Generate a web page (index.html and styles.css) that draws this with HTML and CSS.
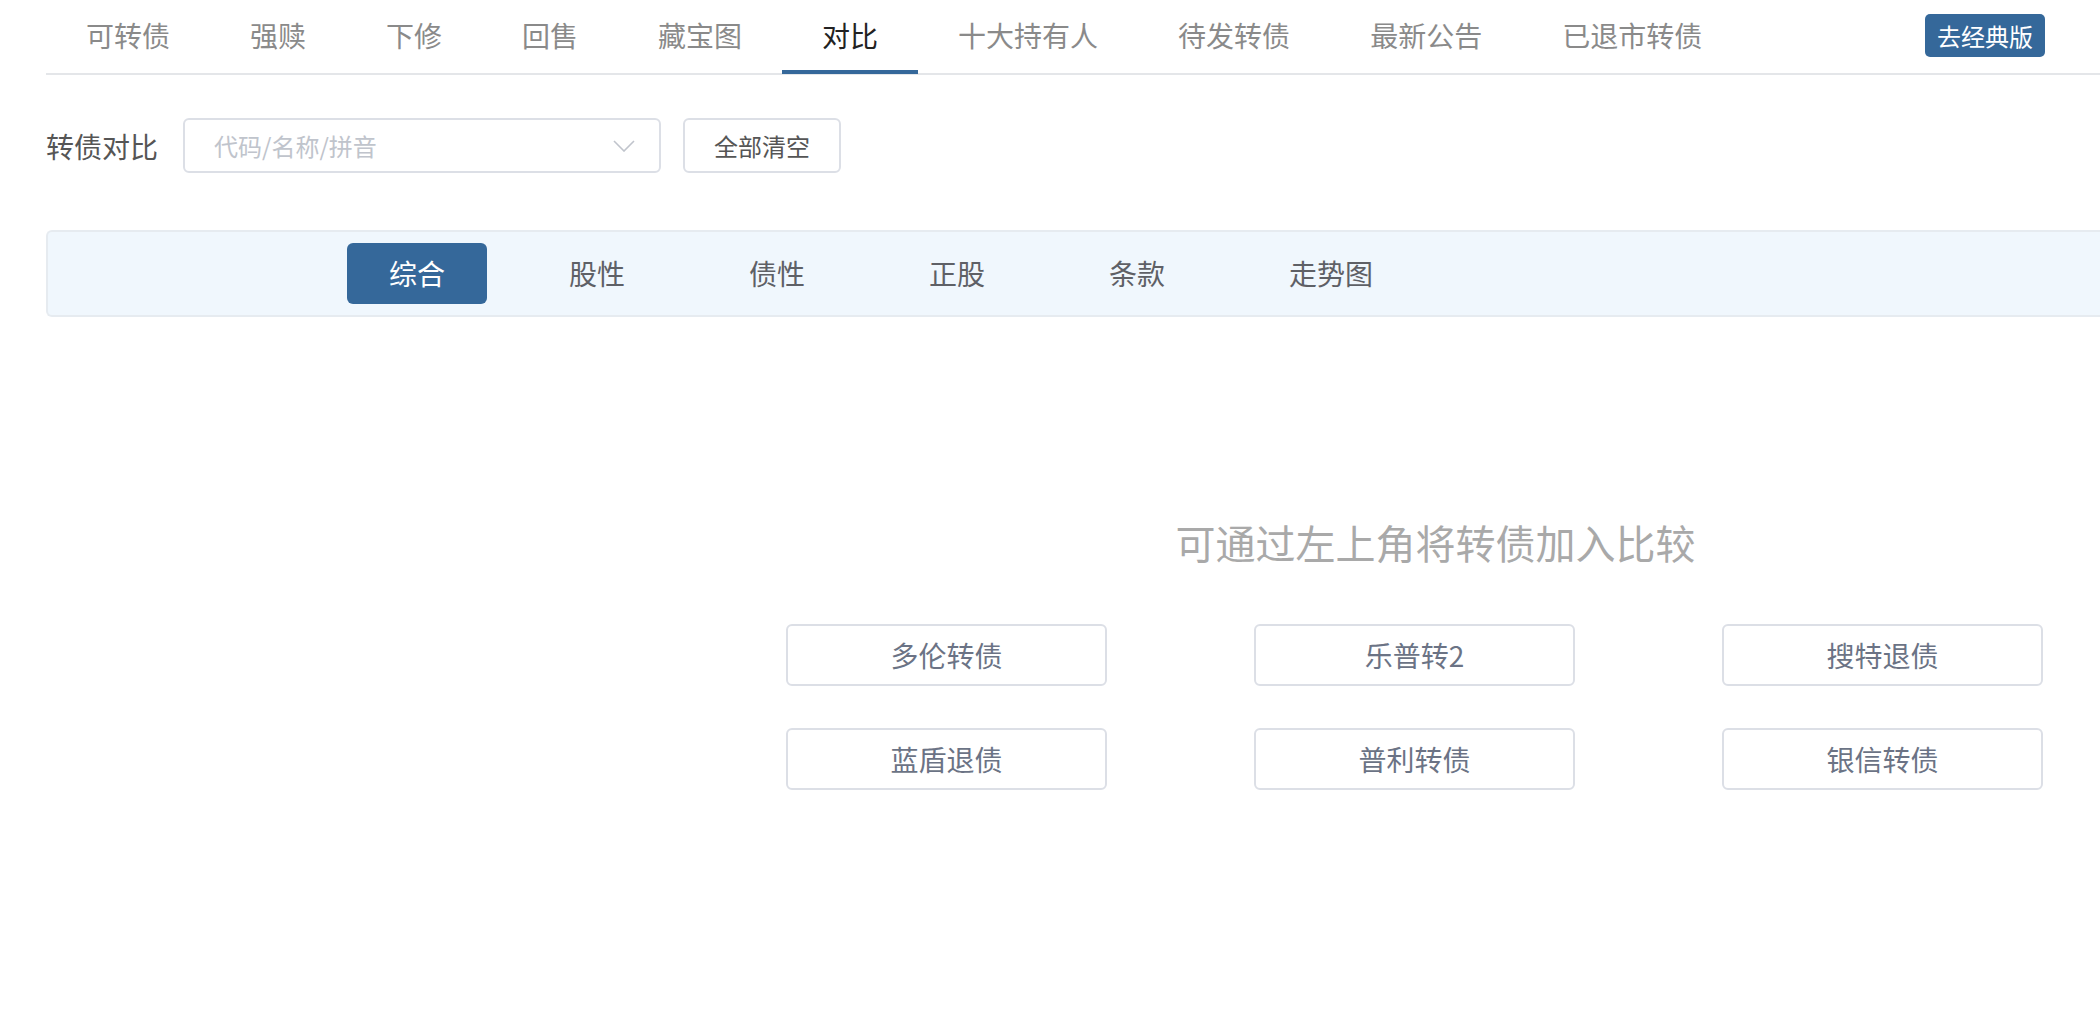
FILE: index.html
```html
<!DOCTYPE html>
<html lang="zh-CN">
<head>
    <meta charset="UTF-8">
    <title>转债对比</title>
    <link rel="stylesheet" href="styles.css">
</head>
<body>
    <div class="page">

        <!-- 顶部导航 -->
        <div class="nav">
            <a class="nav-item" href="#">可转债</a>
            <a class="nav-item" href="#">强赎</a>
            <a class="nav-item" href="#">下修</a>
            <a class="nav-item" href="#">回售</a>
            <a class="nav-item" href="#">藏宝图</a>
            <a class="nav-item active" href="#">对比</a>
            <a class="nav-item" href="#">十大持有人</a>
            <a class="nav-item" href="#">待发转债</a>
            <a class="nav-item" href="#">最新公告</a>
            <a class="nav-item" href="#">已退市转债</a>
            <a class="classic-btn" href="#">去经典版</a>
        </div>

        <!-- 搜索栏 -->
        <div class="toolbar">
            <span class="toolbar-label">转债对比</span>
            <div class="select">
                <span class="select-placeholder">代码/名称/拼音</span>
                <svg class="select-arrow" width="22" height="12" viewBox="0 0 22 12">
                    <polyline points="1,1 11,11 21,1" fill="none" stroke="#c0c4cc" stroke-width="1.6"/>
                </svg>
            </div>
            <button class="clear-btn">全部清空</button>
        </div>

        <!-- 分类切换 -->
        <div class="tabs">
            <span class="tab active">综合</span>
            <span class="tab">股性</span>
            <span class="tab">债性</span>
            <span class="tab">正股</span>
            <span class="tab">条款</span>
            <span class="tab">走势图</span>
        </div>

        <!-- 空状态 -->
        <div class="empty">
            <div class="empty-text">可通过左上角将转债加入比较</div>
            <div class="suggest">
                <button class="suggest-btn">多伦转债</button>
                <button class="suggest-btn">乐普转2</button>
                <button class="suggest-btn">搜特退债</button>
                <button class="suggest-btn">蓝盾退债</button>
                <button class="suggest-btn">普利转债</button>
                <button class="suggest-btn">银信转债</button>
            </div>
        </div>

    </div>
</body>
</html>
```

FILE: styles.css
```css
/* 颜色 */
:root {
    --blue: #35689a;
    --border: #dcdfe6;
    --text: #606266;
}

body {
    margin: 0;
    font-family: "Noto Sans CJK SC", "Noto Sans", sans-serif;
    background: #fff;
    overflow: hidden;
}

.page {
    padding-left: 46px;
}

/* 顶部导航 */
.nav {
    display: flex;
    align-items: flex-start;
    height: 73px;
    border-bottom: 2px solid #e4e6e9;
}

.nav-item {
    display: block;
    padding: 0 40px;
    height: 70px;
    line-height: 70px;
    font-size: 28px;
    color: #8a8a8a;
    text-decoration: none;
    border-bottom: 4px solid transparent;
}

.nav-item.active {
    color: #222;
    border-bottom-color: var(--blue);
}

.classic-btn {
    margin: 14px 55px 0 auto;
    height: 43px;
    line-height: 43px;
    padding: 0 12px;
    font-size: 24px;
    color: #fff;
    background: var(--blue);
    border-radius: 5px;
    text-decoration: none;
}

/* 搜索栏 */
.toolbar {
    display: flex;
    align-items: center;
    margin-top: 43px;
}

.toolbar-label {
    font-size: 28px;
    color: #555;
    margin-right: 25px;
}

.select {
    display: flex;
    align-items: center;
    justify-content: space-between;
    box-sizing: border-box;
    width: 478px;
    height: 55px;
    padding: 0 24px 0 29px;
    border: 2px solid var(--border);
    border-radius: 6px;
}

.select-placeholder {
    font-size: 24px;
    color: #c0c4cc;
}

.clear-btn {
    box-sizing: border-box;
    width: 158px;
    height: 55px;
    margin-left: 22px;
    font-family: inherit;
    font-size: 24px;
    color: #555;
    background: #fff;
    border: 2px solid var(--border);
    border-radius: 6px;
}

/* 分类切换 */
.tabs {
    display: flex;
    gap: 40px;
    margin-top: 57px;
    padding: 11px 0 11px 299px;
    background: #f0f7fd;
    border: 2px solid #e6ebf0;
    border-right: none;
    border-radius: 6px 0 0 6px;
}

.tab {
    height: 61px;
    line-height: 61px;
    padding: 0 42px;
    font-size: 28px;
    color: #5e6066;
    border-radius: 6px;
}

.tab.active {
    color: #fff;
    background: var(--blue);
}

/* 空状态 */
.empty {
    width: 1257px;
    margin: 197px 0 0 740px;
}

.empty-text {
    text-align: center;
    padding-left: 42px;
    font-size: 40px;
    line-height: 56px;
    color: #a9a9a9;
}

.suggest {
    display: grid;
    grid-template-columns: repeat(3, 321px);
    column-gap: 147px;
    row-gap: 42px;
    margin-top: 54px;
}

.suggest-btn {
    height: 62px;
    font-family: inherit;
    font-size: 28px;
    color: #6b7385;
    background: #fff;
    border: 2px solid var(--border);
    border-radius: 6px;
}
```
